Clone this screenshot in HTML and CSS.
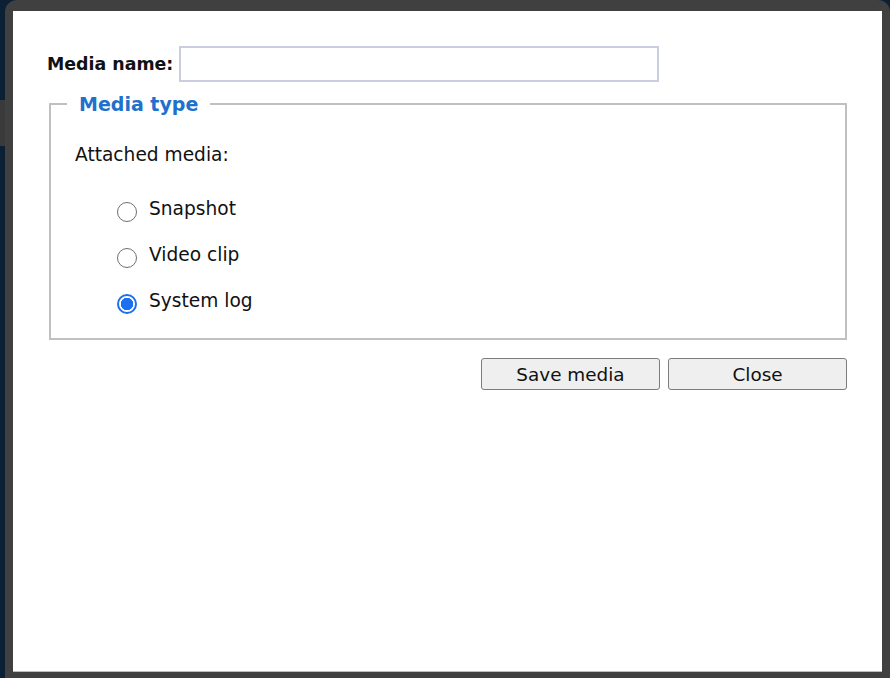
FILE: index.html
```html
<!DOCTYPE html>
<html lang="en">
<head>
    <meta charset="UTF-8">
    <meta name="viewport" content="width=device-width, initial-scale=1.0">
    <title>Media</title>
    <link rel="stylesheet" href="styles.css">
</head>
<body>
    <div class="frame">
        <div class="dialog">
            <div class="name-row">
                <label for="media-name">Media name:</label>
                <input type="text" id="media-name">
            </div>
            <fieldset class="media-type">
                <legend>Media type</legend>
                <p class="attached">Attached media:</p>
                <div class="radio-list">
                    <label class="radio-row"><input type="radio" name="media" value="snapshot"> Snapshot</label>
                    <label class="radio-row"><input type="radio" name="media" value="video"> Video clip</label>
                    <label class="radio-row"><input type="radio" name="media" value="log" checked> System log</label>
                </div>
            </fieldset>
            <div class="buttons">
                <button type="button">Save media</button>
                <button type="button">Close</button>
            </div>
        </div>
    </div>
</body>
</html>
```

FILE: styles.css
```css
html, body {
    height: 100%;
}
body {
    margin: 0;
    overflow: hidden;
    font-family: "DejaVu Sans", Verdana, sans-serif;
    color: #111;
    background: linear-gradient(to bottom, #0b1f35 0, #0b1f35 100px, #3a3a3a 100px, #3a3a3a 146px, #0b1f35 146px);
}
.frame {
    margin-left: 5px;
    height: 678px;
    box-sizing: border-box;
    padding: 11px 8px 6px 8px;
    background-color: #404040;
    border-radius: 12px 12px 0 0;
}
.dialog {
    height: 100%;
    box-sizing: border-box;
    background-color: #fff;
    border-bottom: 1px solid #bdbdbd;
    padding: 35px 35px 0 36px;
}
.name-row {
    display: flex;
    align-items: center;
    gap: 6px;
    margin-left: -2px;
}
.name-row label {
    font-weight: bold;
    font-size: 17.4px;
}
.name-row input {
    width: 480px;
    height: 36px;
    box-sizing: border-box;
    border: 2px solid #caccdf;
    padding: 4px 6px;
    font-size: 17px;
    font-family: inherit;
    outline: none;
}
.media-type {
    margin: 10px 0 0 0;
    border: 2px solid #c0c0c0;
    padding: 27px 24px 15px 24px;
}
.media-type legend {
    font-size: 19px;
    font-weight: bold;
    line-height: 24px;
    color: #2170cc;
    padding: 0 12px;
    margin-left: -8px;
}
.attached {
    margin: 0;
    font-size: 18.6px;
    line-height: 24px;
}
.radio-list {
    margin-top: 18px;
    padding-left: 42px;
}
.radio-row {
    display: flex;
    align-items: center;
    gap: 12px;
    height: 46px;
    font-size: 18.6px;
}
.radio-row input {
    appearance: none;
    -webkit-appearance: none;
    margin: 8px 0 0 0;
    width: 20px;
    height: 20px;
    border: 1.5px solid #6f6f6f;
    border-radius: 50%;
    box-sizing: border-box;
    background-color: #fff;
}
.radio-row input:checked {
    border: 2px solid #1a6ff2;
    background: radial-gradient(circle, #1a6ff2 0, #1a6ff2 6px, #fff 6.5px);
}
.buttons {
    display: flex;
    justify-content: flex-end;
    gap: 8px;
    margin-top: 18px;
}
.buttons button {
    width: 179px;
    height: 32px;
    border: 1px solid #7c7c7c;
    border-radius: 3px;
    background-color: #efefef;
    font-family: inherit;
    font-size: 18.4px;
    color: #111;
    padding: 0;
}
```
